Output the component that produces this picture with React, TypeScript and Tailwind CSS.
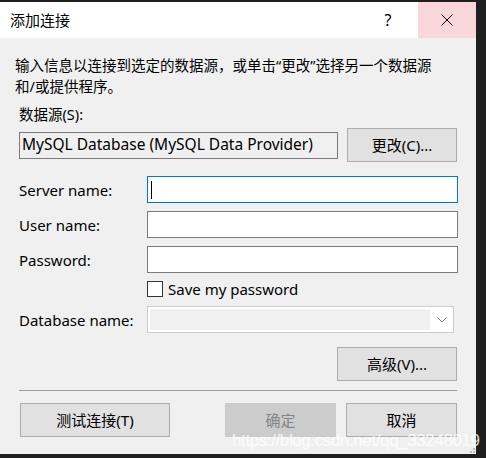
import React from "react";

const font = { fontFamily: '"Noto Sans", "Noto Sans CJK SC", sans-serif' };

function Field({ label, focused }: { label: string; focused?: boolean }) {
  return (
    <div className="grid grid-cols-[128px_1fr] items-center">
      <span className="text-[15px] leading-[20px]">{label}</span>
      <div
        className={`relative h-[27px] w-[311px] bg-white border ${
          focused ? "border-[#0078d7]" : "border-[#7a7a7a]"
        }`}
      >
        {focused && (
          <span className="absolute left-[3px] top-[4px] h-[18px] w-[1px] bg-black" />
        )}
      </div>
    </div>
  );
}

function Btn({
  children,
  className = "",
  disabled,
}: {
  children: React.ReactNode;
  className?: string;
  disabled?: boolean;
}) {
  return (
    <div
      className={`h-[34px] flex items-center justify-center border text-[15px] ${
        disabled
          ? "bg-[#cccccc] border-[#cccccc] text-[#838383]"
          : "bg-[#e1e1e1] border-[#adadad] text-black"
      } ${className}`}
    >
      {children}
    </div>
  );
}

export default function App() {
  return (
    <div className="w-[486px] h-[458px] bg-[#1f1f1f] overflow-hidden" style={font}>
      <div className="relative mt-[2px] w-[476px] h-[452px] bg-[#f0f0f0] text-black">
        {/* title bar */}
        <div className="h-[36px] bg-white flex items-center">
          <span className="pl-[10px] flex-1 text-[15px]">添加连接</span>
          <div className="w-[58px] h-full flex items-center justify-center text-[16px] pr-[2px]">?</div>
          <div className="w-[58px] h-full bg-[#f9d6d9] flex items-center justify-center">
            <svg width="12" height="12" viewBox="0 0 12 12">
              <path d="M0.5 0.5 L11.5 11.5 M11.5 0.5 L0.5 11.5" stroke="#000" strokeWidth="1" />
            </svg>
          </div>
        </div>

        <div className="px-[19px]">
          <p className="mt-[17px] -ml-[4px] text-[14.5px] leading-[21px] whitespace-nowrap">
            输入信息以连接到选定的数据源，或单击“更改”选择另一个数据源
            <br />
            和/或提供程序。
          </p>

          <div className="mt-[7px] text-[14.5px] leading-[20px]">数据源(S):</div>

          <div className="mt-[4px] flex items-center justify-between">
            <div className="h-[27px] w-[319px] border border-[#7a7a7a] flex items-center pl-[2px] text-[15.5px] whitespace-nowrap">
              MySQL Database (MySQL Data Provider)
            </div>
            <Btn className="w-[110px]">更改(C)...</Btn>
          </div>

          <div className="mt-[14px] flex flex-col gap-[8px]">
            <Field label="Server name:" focused />
            <Field label="User name:" />
            <Field label="Password:" />
          </div>

          <div className="mt-[8px] pl-[128px] flex items-center gap-[5px]">
            <span className="w-[16px] h-[16px] bg-white border border-[#333333]" />
            <span className="text-[15px] leading-[16px]">Save my password</span>
          </div>

          <div className="mt-[9px] grid grid-cols-[128px_1fr] items-center">
            <span className="text-[15px] leading-[20px]">Database name:</span>
            <div className="h-[27px] w-[307px] bg-white border border-[#cccccc] flex items-center pl-[2px]">
              <div className="h-[21px] w-[280px] bg-[#f0f0f0]" />
              <div className="flex-1 flex justify-center">
                <svg width="10" height="6" viewBox="0 0 10 6">
                  <path d="M0.5 0.5 L5 5 L9.5 0.5" fill="none" stroke="#888" strokeWidth="1" />
                </svg>
              </div>
            </div>
          </div>

          <div className="mt-[14px] flex justify-end">
            <Btn className="w-[120px]">高级(V)...</Btn>
          </div>

          <div className="mt-[9px] h-[1px] bg-[#a0a0a0]" />

          <div className="mt-[12px] flex items-center">
            <Btn className="w-[150px] ml-[1px]">测试连接(T)</Btn>
            <div className="flex-1" />
            <Btn className="w-[111px]" disabled>确定</Btn>
            <Btn className="w-[111px] ml-[10px]">取消</Btn>
          </div>
        </div>

        {/* watermark */}
        <div
          className="absolute left-[232px] top-[428px] text-[17px] leading-[22px] tracking-[-0.4px] text-white/80 whitespace-nowrap"
          style={{ fontFamily: '"Liberation Sans", sans-serif' }}
        >
          https://blog.csdn.net/qq_33248019
        </div>

        {/* size grip */}
        <div className="absolute right-[1px] bottom-[1px] grid grid-cols-3 gap-[1px]">
          <span />
          <span />
          <span className="w-[2px] h-[2px] bg-[#bcbcbc]" />
          <span />
          <span className="w-[2px] h-[2px] bg-[#bcbcbc]" />
          <span className="w-[2px] h-[2px] bg-[#bcbcbc]" />
        </div>
      </div>
    </div>
  );
}
